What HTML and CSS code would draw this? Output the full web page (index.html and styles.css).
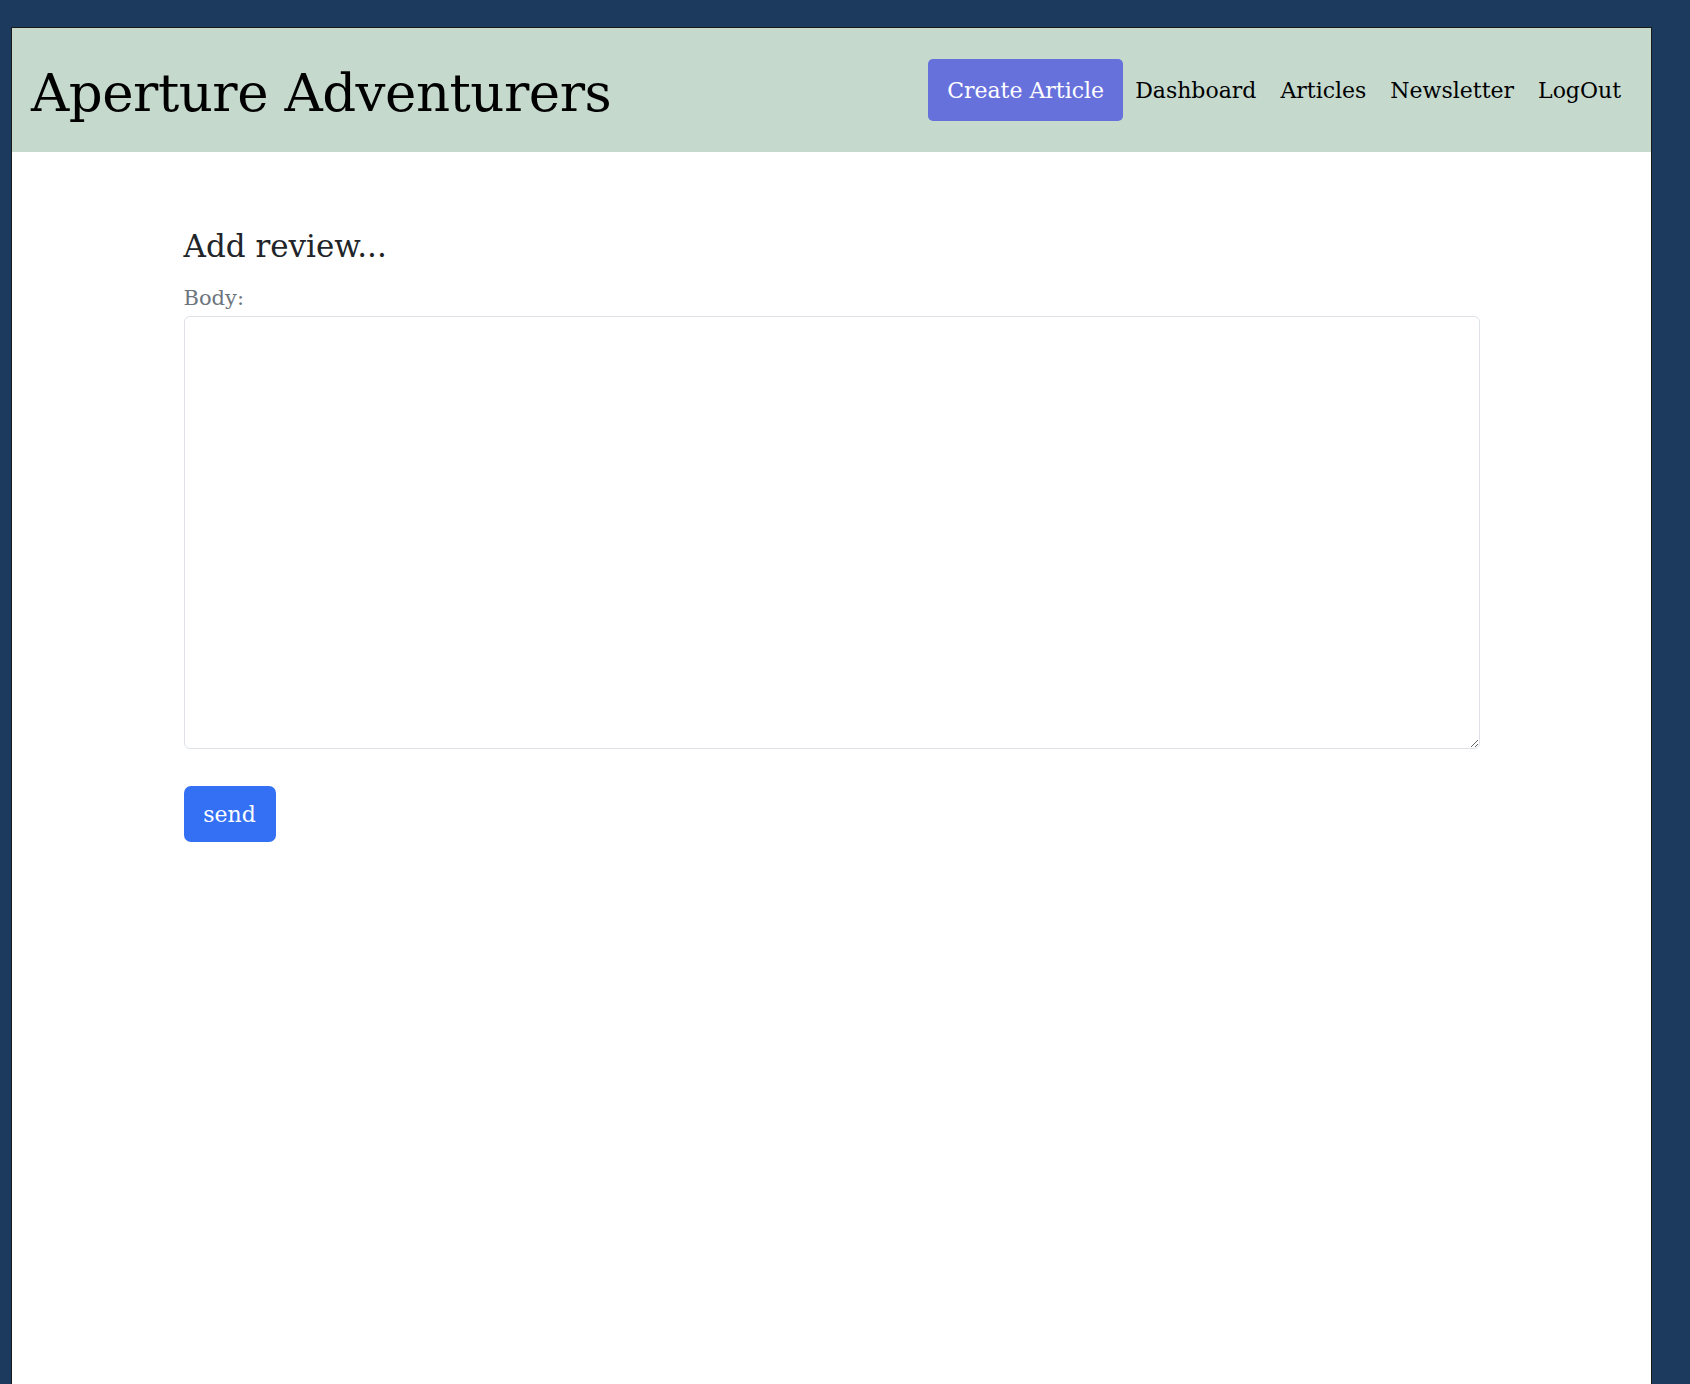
FILE: index.html
```html
<!DOCTYPE html>
<html lang="en">
<head>
<meta charset="utf-8">
<title>Aperture Adventurers</title>
<link rel="stylesheet" href="styles.css">
</head>
<body>
<div class="page">
  <header class="topbar">
    <a class="brand" href="#">Aperture Adventurers</a>
    <nav class="nav">
      <a class="btn-create" href="#">Create Article</a>
      <a class="nav-link" href="#">Dashboard</a>
      <a class="nav-link" href="#">Articles</a>
      <a class="nav-link" href="#">Newsletter</a>
      <a class="nav-link" href="#">LogOut</a>
    </nav>
  </header>
  <main class="container">
    <h3 class="title">Add review...</h3>
    <form class="review-form">
      <label class="label" for="body">Body:</label>
      <textarea id="body" class="body-input"></textarea>
      <button type="button" class="btn-send">send</button>
    </form>
  </main>
</div>
</body>
</html>
```

FILE: styles.css
```css
html, body {
  margin: 0;
  padding: 0;
}
body {
  background: #1b3a5e;
  font-family: "DejaVu Serif", serif;
  color: #212529;
  height: 1384px;
  overflow: hidden;
}
.page {
  margin: 27px 0 0 11px;
  width: 1639px;
  height: 1357px;
  border: 1px solid #1a1a1a;
  border-bottom: none;
  background: #ffffff;
}
.topbar {
  height: 124px;
  background: #c5d9cd;
  display: flex;
  align-items: center;
  justify-content: space-between;
  padding: 0 30px 0 19px;
}
.brand {
  color: #000;
  text-decoration: none;
  font-size: 53px;
  font-weight: 300;
  letter-spacing: -0.5px;
  padding-top: 4px;
}
.nav {
  display: flex;
  align-items: center;
  gap: 24px;
}
.btn-create {
  background: #6771dc;
  color: #fff;
  text-decoration: none;
  font-size: 22px;
  height: 62px;
  padding: 0 19px;
  display: flex;
  align-items: center;
  border-radius: 5px;
  margin-right: -12px;
}
.nav-link {
  color: #000;
  text-decoration: none;
  font-size: 22px;
}
.container {
  width: 1296px;
  margin: 0 auto;
  padding-top: 76px;
}
.title {
  margin: 0 0 21px;
  font-size: 31px;
  font-weight: 400;
  line-height: 1.2;
}
.review-form {
  display: flex;
  flex-direction: column;
  align-items: flex-start;
}
.label {
  color: #6c757d;
  font-size: 21px;
  line-height: 1.2;
  margin-bottom: 5px;
}
.body-input {
  box-sizing: border-box;
  width: 1296px;
  height: 433px;
  border: 1px solid #dee2e6;
  border-radius: 6px;
  font-family: inherit;
  resize: vertical;
}
.btn-send {
  margin-top: 37px;
  width: 92px;
  height: 56px;
  background: #3470f4;
  color: #fff;
  border: none;
  border-radius: 7px;
  font-family: inherit;
  font-size: 22px;
  padding: 0;
}
```
